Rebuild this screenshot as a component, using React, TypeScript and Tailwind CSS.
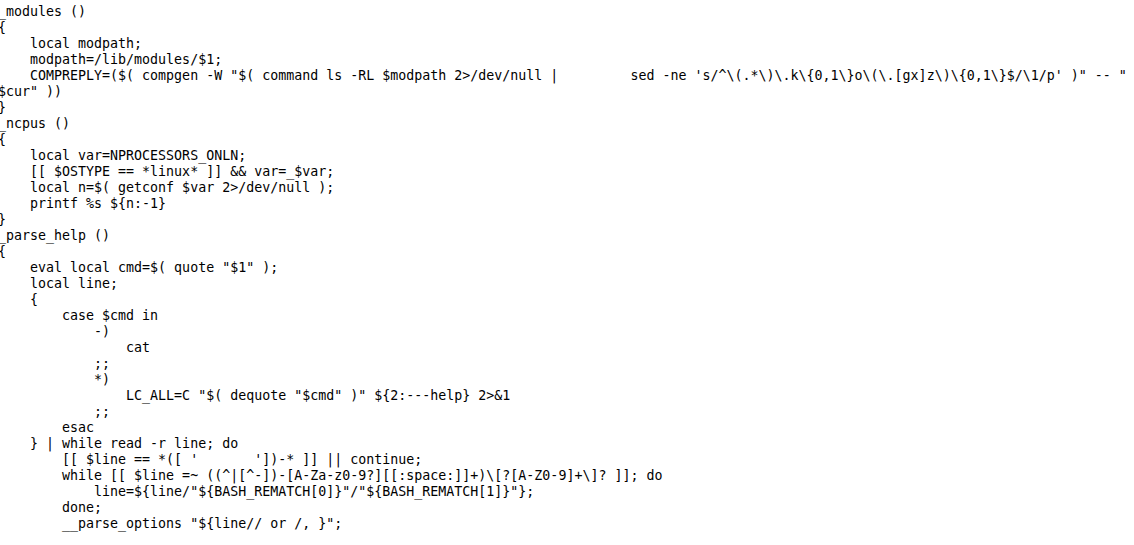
const lines: string[] = [
  "_modules ()",
  "{",
  "    local modpath;",
  "    modpath=/lib/modules/$1;",
  "    COMPREPLY=($( compgen -W \"$( command ls -RL $modpath 2>/dev/null |         sed -ne 's/^\\(.*\\)\\.k\\{0,1\\}o\\(\\.[gx]z\\)\\{0,1\\}$/\\1/p' )\" -- \"",
  "$cur\" ))",
  "}",
  "_ncpus ()",
  "{",
  "    local var=NPROCESSORS_ONLN;",
  "    [[ $OSTYPE == *linux* ]] && var=_$var;",
  "    local n=$( getconf $var 2>/dev/null );",
  "    printf %s ${n:-1}",
  "}",
  "_parse_help ()",
  "{",
  "    eval local cmd=$( quote \"$1\" );",
  "    local line;",
  "    {",
  "        case $cmd in",
  "            -)",
  "                cat",
  "            ;;",
  "            *)",
  "                LC_ALL=C \"$( dequote \"$cmd\" )\" ${2:---help} 2>&1",
  "            ;;",
  "        esac",
  "    } | while read -r line; do",
  "        [[ $line == *([ '       '])-* ]] || continue;",
  "        while [[ $line =~ ((^|[^-])-[A-Za-z0-9?][[:space:]]+)\\[?[A-Z0-9]+\\]? ]]; do",
  "            line=${line/\"${BASH_REMATCH[0]}\"/\"${BASH_REMATCH[1]}\"};",
  "        done;",
  "        __parse_options \"${line// or /, }\";",
];

export default function App() {
  return (
    <div className="w-[1134px] h-[545px] overflow-hidden bg-white">
      <pre className="ml-[-2px] pt-[4px] font-['DejaVu_Sans_Mono',monospace] text-[13.3px] leading-[16px] text-black whitespace-pre">
        {lines.map((line, i) => (
          <div key={i}>{line}</div>
        ))}
      </pre>
    </div>
  );
}
